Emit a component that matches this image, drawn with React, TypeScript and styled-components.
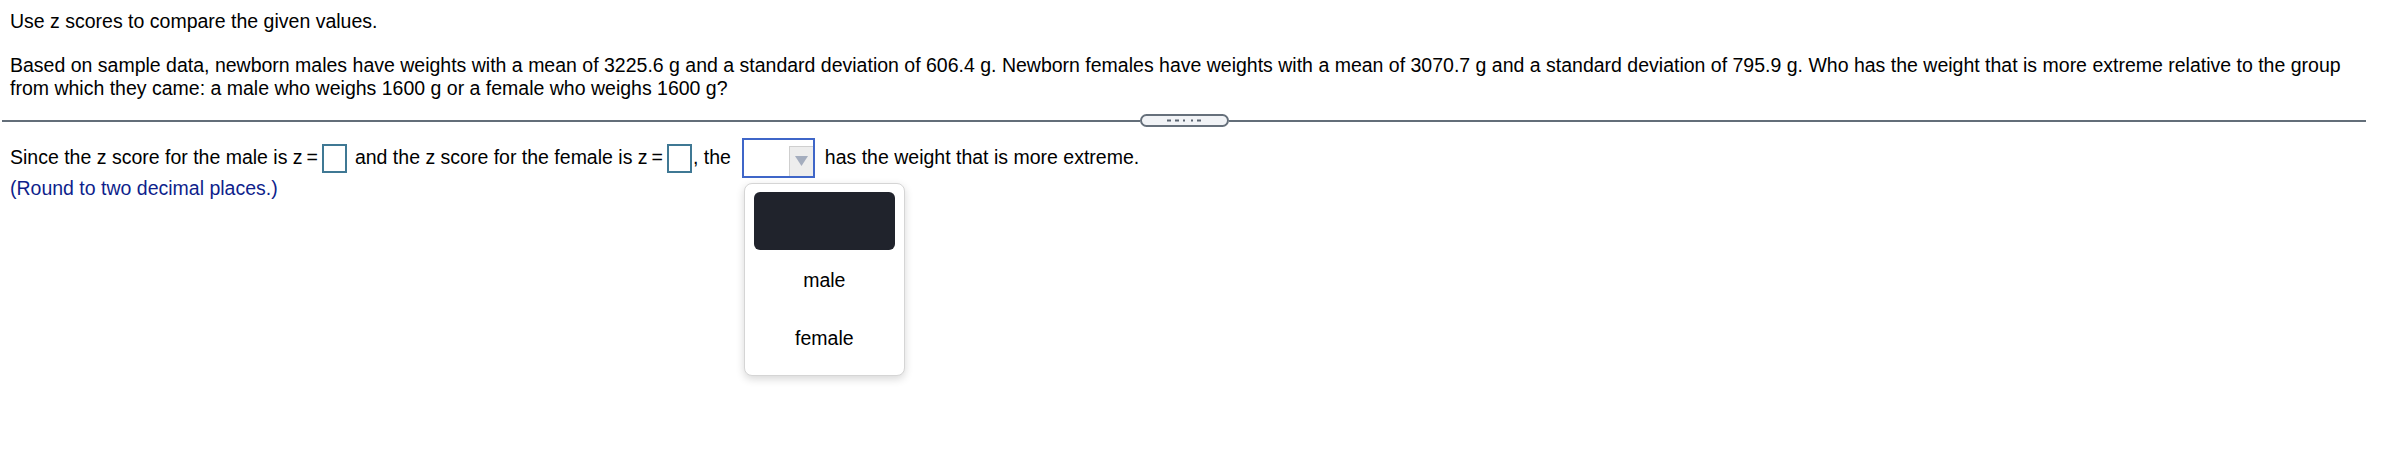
import React from "react";
import styled, { createGlobalStyle } from "styled-components";

const GlobalStyle = createGlobalStyle`
  html, body {
    margin: 0;
    padding: 0;
    background: #ffffff;
  }
  body {
    font-family: "Liberation Sans", Arial, Helvetica, sans-serif;
  }
`;

const Page = styled.div`
  box-sizing: border-box;
  width: 2366px;
  min-height: 456px;
  padding: 10px 0 0 10px;
  font-size: 19.5px;
  line-height: 23px;
  color: #000;
`;

const Paragraph = styled.p<{ $gap?: number }>`
  margin: ${(p) => p.$gap ?? 0}px 0 0;
`;

const Divider = styled.div`
  margin: 14px 0 0 -8px;
  height: 13px;
  display: flex;
  align-items: center;
`;

const RuleLine = styled.div`
  flex: 1;
  height: 2px;
  background: #636e79;
`;

const Pill = styled.div`
  box-sizing: border-box;
  width: 89px;
  height: 13px;
  border: 2px solid #66707b;
  border-radius: 7px;
  background: #f1f3f6;
  display: flex;
  align-items: center;
  justify-content: center;
`;

const AnswerRow = styled.div`
  margin-top: 11px;
  height: 39px;
  display: flex;
  align-items: center;
  white-space: pre;
`;

const AnswerBox = styled.span<{ $ml: number; $mr: number }>`
  box-sizing: border-box;
  display: inline-block;
  width: 25px;
  height: 29px;
  border: 2px solid #3f7894;
  background: #fff;
  margin: 1px ${(p) => p.$mr}px 0 ${(p) => p.$ml}px;
`;

const SelectWrap = styled.div`
  position: relative;
  margin: 0 10px 0 11px;
`;

const SelectBox = styled.div`
  box-sizing: border-box;
  width: 73px;
  height: 40px;
  border: 2px solid #3f66c8;
  background: #fff;
  display: flex;
  justify-content: flex-end;
  align-items: flex-end;
`;

const ArrowButton = styled.div`
  box-sizing: border-box;
  width: 24px;
  height: 30px;
  background: #ededed;
  border: 1px solid #cfcfcf;
  border-bottom: none;
  border-right: none;
  display: flex;
  align-items: center;
  justify-content: center;
`;

const Menu = styled.div`
  position: absolute;
  top: 45px;
  left: 2px;
  box-sizing: border-box;
  width: 161px;
  padding: 8px 9px 9px;
  border: 1px solid #d5d5d5;
  border-radius: 8px;
  background: #fff;
  box-shadow: 0 3px 9px rgba(0, 0, 0, 0.16);
  z-index: 5;
`;

const MenuItem = styled.div<{ $blank?: boolean }>`
  height: 58px;
  display: flex;
  align-items: center;
  justify-content: center;
  border-radius: 6px;
  background: ${(p) => (p.$blank ? "#20232c" : "transparent")};
  color: #000;
  padding-top: 4px;
  box-sizing: border-box;
`;

const Hint = styled.div`
  color: #0f1f8c;
`;

const Dashes = () => (
  <svg width="34" height="3" viewBox="0 0 34 3">
    <rect x="0" y="0.5" width="4" height="2" fill="#5a6470" />
    <rect x="8" y="0.5" width="4" height="2" fill="#5a6470" />
    <rect x="16" y="0.5" width="2" height="2" fill="#5a6470" />
    <rect x="24" y="0.5" width="2" height="2" fill="#5a6470" />
    <rect x="30" y="0.5" width="4" height="2" fill="#5a6470" />
  </svg>
);

const Triangle = () => (
  <svg width="13" height="10" viewBox="0 0 13 10">
    <polygon points="0,0 13,0 6.5,10" fill="#a4adbe" />
  </svg>
);

export default function App() {
  return (
    <>
      <GlobalStyle />
      <Page>
        <Paragraph>Use z scores to compare the given values.</Paragraph>
        <Paragraph $gap={21}>
          Based on sample data, newborn males have weights with a mean of 3225.6 g and a standard deviation of 606.4 g. Newborn females have weights with a mean of 3070.7 g and a standard deviation of 795.9 g. Who has the weight that is more extreme relative to the group from which they came: a male who weighs 1600 g or a female who weighs 1600 g?
        </Paragraph>
        <Divider>
          <RuleLine />
          <Pill>
            <Dashes />
          </Pill>
          <RuleLine />
        </Divider>
        <AnswerRow>
          <span>Since the z score for the male is z{"\u2009"}=</span>
          <AnswerBox $ml={4} $mr={8} />
          <span>and the z score for the female is z{"\u2009"}=</span>
          <AnswerBox $ml={4} $mr={1} />
          <span>, the</span>
          <SelectWrap>
            <SelectBox>
              <ArrowButton>
                <Triangle />
              </ArrowButton>
            </SelectBox>
            <Menu>
              <MenuItem $blank />
              <MenuItem>male</MenuItem>
              <MenuItem>female</MenuItem>
            </Menu>
          </SelectWrap>
          <span>has the weight that is more extreme.</span>
        </AnswerRow>
        <Hint>(Round to two decimal places.)</Hint>
      </Page>
    </>
  );
}
